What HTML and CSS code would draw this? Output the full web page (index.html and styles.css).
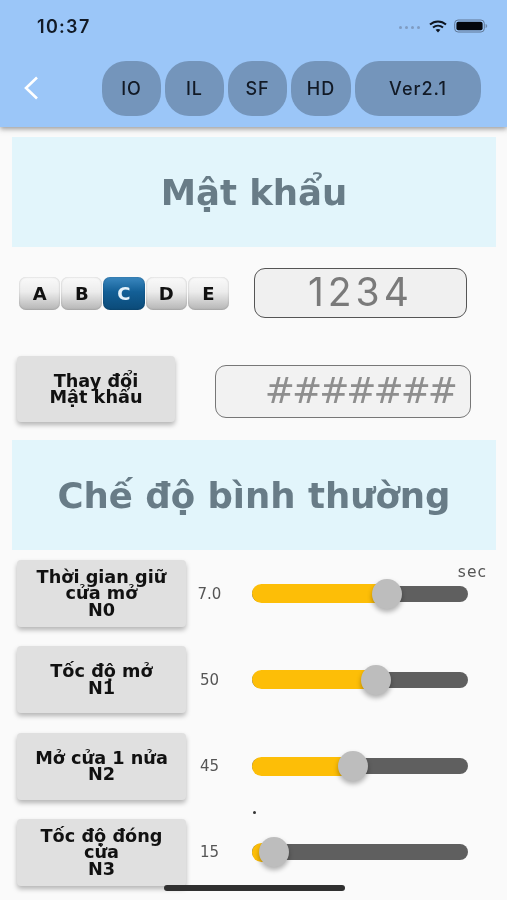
FILE: index.html
```html
<!DOCTYPE html>
<html lang="vi">
<head>
<meta charset="utf-8">
<title>Mật khẩu</title>
<link rel="stylesheet" href="styles.css">
</head>
<body>
<div class="screen">
  <header class="appbar">
    <div class="status">
      <span class="clock">10:37</span>
      <div class="status-icons">
        <span class="signal"><i></i><i></i><i></i><i></i></span>
        <svg class="wifi" width="18" height="13" viewBox="0 0 18 13"><path d="M1 4.600C5.600.4 12.400.4 17 4.600" fill="none" stroke="#0d1420" stroke-width="2"/><path d="M4 7.600c2.900-2.500 7.100-2.500 10 0" fill="none" stroke="#0d1420" stroke-width="2"/><path d="M6.600 9.800c1.400-1.100 3.400-1.100 4.800 0L9 12.600z" fill="#0d1420"/></svg>
        <svg class="battery" width="34" height="14" viewBox="0 0 34 14"><rect x=".7" y="1" width="29.600" height="12" rx="3.400" fill="none" stroke="#5f7796" stroke-width="1"/><rect x="2.400" y="2.700" width="26.200" height="8.600" rx="2" fill="#05070c"/><path d="M31.600 5v4c1-.3 1.600-1 1.600-2s-.6-1.700-1.600-2z" fill="#6f88a8"/></svg>
      </div>
    </div>
    <nav class="nav">
      <svg class="back" width="20" height="26" viewBox="0 0 20 26"><path d="M16 2.500 5 13l11 10.500" fill="none" stroke="#fff" stroke-width="2.600"/></svg>
      <div class="tabs">
        <span class="tab tab-s">IO</span>
        <span class="tab tab-s">IL</span>
        <span class="tab tab-s">SF</span>
        <span class="tab tab-m">HD</span>
        <span class="tab tab-l">Ver2.1</span>
      </div>
    </nav>
  </header>

  <main class="content">
    <h1 class="banner">Mật khẩu</h1>

    <div class="pass-row">
      <div class="keys">
        <span class="key">A</span>
        <span class="key">B</span>
        <span class="key key-on">C</span>
        <span class="key">D</span>
        <span class="key">E</span>
      </div>
      <div class="code">1234</div>
    </div>

    <div class="change-row">
      <div class="btn btn-change">Thay đổi<br>Mật khẩu</div>
      <div class="hash">#######</div>
    </div>

    <h1 class="banner banner-two">Chế độ bình thường</h1>

    <div class="rows">
      <div class="row">
        <div class="btn btn-row">Thời gian giữ<br>cửa mở<br>N0</div>
        <span class="val">7.0</span>
        <div class="track"><div class="fill" style="width:135px"></div><span class="thumb"></span></div>
        <span class="sec">sec</span>
      </div>
      <div class="row">
        <div class="btn btn-row">Tốc độ mở<br>N1</div>
        <span class="val">50</span>
        <div class="track"><div class="fill" style="width:123px"></div><span class="thumb"></span></div>
      </div>
      <div class="row">
        <div class="btn btn-row">Mở cửa 1 nửa<br>N2</div>
        <span class="val">45</span>
        <div class="track"><div class="fill" style="width:101px"></div><span class="thumb"></span></div>
        <span class="dot"></span>
      </div>
      <div class="row">
        <div class="btn btn-row">Tốc độ đóng<br>cửa<br>N3</div>
        <span class="val">15</span>
        <div class="track"><div class="fill" style="width:22px"></div><span class="thumb"></span></div>
      </div>
    </div>
  </main>
  <span class="home"></span>
</div>
</body>
</html>
```
FILE: styles.css
```css
* { box-sizing: border-box; }
html, body { margin: 0; padding: 0; }
body { background: #fafafa; font-family: "DejaVu Sans", sans-serif; }
.screen { position: relative; width: 507px; height: 900px; overflow: hidden; background: #fafafa; filter: blur(.35px); }

.appbar { position: relative; z-index: 2; height: 127px; background: #9bc6f8; box-shadow: 0 2px 5px rgba(60,60,60,.5); padding-top: 16px; }
.status { display: flex; justify-content: space-between; align-items: center; height: 20px; padding: 0 19px 0 37px; }
.clock { font: 600 18px "Inter", sans-serif; letter-spacing: 1.300px; color: #121a26; }
.status-icons { display: flex; align-items: center; gap: 7px; }
.signal { display: flex; gap: 3px; margin-right: 2px; margin-top: 3px; }
.signal i { width: 3px; height: 3px; border-radius: 50%; background: #7f9cc2; }

.nav { display: flex; align-items: center; height: 55px; margin-top: 25px; padding: 0 26px 0 21px; }
.back { flex: none; margin-top: -2px; }
.tabs { display: flex; gap: 4px; margin-left: 61px; }
.tab { display: flex; align-items: center; justify-content: center; height: 55px; background: #7495bb; border-radius: 24px; color: #121a26; font: 500 18px "Inter", sans-serif; letter-spacing: 1px; }
.tab-s { width: 59px; }
.tab-m { width: 60px; }
.tab-l { width: 126px; }

.content { padding: 10px 11px 0 12px; }
.banner { display: flex; align-items: center; justify-content: center; height: 110px; margin: 0; background: #e2f5fb; color: #687c87; font: 700 35.500px "DejaVu Sans", sans-serif; }
.banner-two { margin-top: 18px; }

.pass-row { display: flex; align-items: center; margin-top: 21px; padding-left: 7px; }
.keys { display: flex; gap: 1px; }
.key { display: flex; align-items: center; justify-content: center; width: 41.200px; height: 33px; border-radius: 7px; background: linear-gradient(#fafafa 0%, #ececec 45%, #b5b5b5 100%); box-shadow: inset 0 0 2px rgba(0,0,0,.25); color: #111; font: 700 18px "DejaVu Sans", sans-serif; }
.key-on { background: linear-gradient(#3b88c0 0%, #135f96 45%, #0b4a78 100%); color: #e6f2fa; }
.code { width: 213px; height: 50px; margin-left: 25px; border: 1.500px solid #555; border-radius: 11px; background: #f0f0f0; color: #7a7a7a; font: 400 39px/46px "Inter", sans-serif; letter-spacing: 4px; text-align: center; }

.change-row { display: flex; align-items: center; margin-top: 38px; padding-left: 5px; }
.btn { display: flex; align-items: center; justify-content: center; text-align: center; background: #e0e0e0; border-radius: 4px; box-shadow: 0 3px 5px rgba(0,0,0,.28); color: #111; font: 700 17.700px/16.500px "DejaVu Sans", sans-serif; }
.btn-change { width: 158px; height: 66px; }
.hash { width: 256px; height: 53px; margin: 5px 0 0 40px; padding-right: 15px; border: 1.500px solid #777; border-radius: 11px; background: #f2f2f2; color: #8e8e8e; font: 400 36px/50px "DejaVu Sans", sans-serif; letter-spacing: -3px; text-align: right; overflow: hidden; white-space: nowrap; }

.rows { display: flex; flex-direction: column; gap: 19.300px; margin-top: 10px; padding-left: 5px; }
.row { position: relative; display: flex; align-items: center; height: 67px; }
.btn-row { width: 169px; height: 67px; }
.val { width: 47px; text-align: center; color: #555; font: 400 15px "DejaVu Sans", sans-serif; }
.track { position: relative; width: 216px; height: 16px; margin-left: 19px; border-radius: 8px; background: #5f5f5f; }
.fill { height: 19px; margin-top: -1.500px; border-radius: 9.500px 0 0 9.500px; background: #fdbe07; }
.thumb { position: absolute; top: -7px; width: 30px; height: 30px; border-radius: 50%; background: #bdbdbd; box-shadow: 0 3px 5px rgba(0,0,0,.3); }
.fill + .thumb { left: 120px; }
.row:nth-child(2) .thumb { left: 109px; }
.row:nth-child(3) .thumb { left: 86px; }
.row:nth-child(4) .thumb { left: 7px; }
.sec { position: absolute; top: 3px; right: 9px; color: #555; font: 400 15.500px "DejaVu Sans", sans-serif; letter-spacing: 1px; }
.dot { position: absolute; left: 236px; bottom: -14px; width: 3px; height: 3px; border-radius: 50%; background: #333; }
.home { position: absolute; z-index: 3; left: 164px; top: 885px; width: 181px; height: 6px; border-radius: 3px; background: #303030; }
```
